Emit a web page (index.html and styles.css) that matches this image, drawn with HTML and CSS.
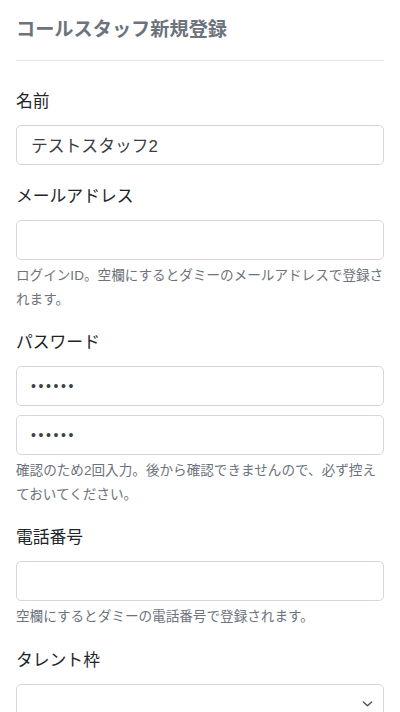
FILE: index.html
```html
<!DOCTYPE html>
<html lang="ja">
<head>
<meta charset="utf-8">
<title>コールスタッフ新規登録</title>
<link rel="stylesheet" href="styles.css">
</head>
<body>
<div class="page">
  <header class="page-header">
    <h1 class="page-title">コールスタッフ新規登録</h1>
  </header>
  <form class="form">
    <div class="group">
      <label class="label">名前</label>
      <input class="control" type="text" value="テストスタッフ2">
    </div>
    <div class="group">
      <label class="label">メールアドレス</label>
      <input class="control" type="email" value="">
      <p class="help">ログインID。空欄にするとダミーのメールアドレスで登録されます。</p>
    </div>
    <div class="group">
      <label class="label">パスワード</label>
      <input class="control control-pw" type="password" value="123456">
      <input class="control control-pw control-second" type="password" value="123456">
      <p class="help">確認のため2回入力。後から確認できませんので、必ず控えておいてください。</p>
    </div>
    <div class="group">
      <label class="label">電話番号</label>
      <input class="control" type="tel" value="">
      <p class="help">空欄にするとダミーの電話番号で登録されます。</p>
    </div>
    <div class="group">
      <label class="label">タレント枠</label>
      <div class="select-wrap">
        <select class="control select"><option></option></select>
        <svg class="chevron" viewBox="0 0 12 8" width="11" height="8"><path d="M1.5 1.8 L6 6 L10.5 1.8" fill="none" stroke="#4b5563" stroke-width="1.6" stroke-linecap="round" stroke-linejoin="round"/></svg>
      </div>
    </div>
  </form>
</div>
</body>
</html>
```
FILE: styles.css
```css
* { box-sizing: border-box; }
html, body { margin: 0; padding: 0; background: #fff; }
body {
  font-family: "Liberation Sans", "Noto Sans CJK JP", sans-serif;
  color: #212529;
}
.page { padding: 0 16px; }
.page-header {
  padding: 16px 0 16px;
  border-bottom: 1px solid #e3e6ea;
}
.page-title {
  margin: 0;
  font-size: 19.2px;
  line-height: 28px;
  font-weight: 700;
  color: #6c737c;
}
.form { padding-top: 29px; }
.group { margin-bottom: 20px; }
.label {
  display: block;
  font-size: 16.8px;
  line-height: 24px;
  margin-bottom: 11px;
  color: #212529;
}
.control {
  display: block;
  width: 100%;
  height: 40px;
  padding: 0 14px;
  font-family: "Liberation Sans", "Noto Sans CJK JP", sans-serif;
  font-size: 16.8px;
  color: #3a3f45;
  background: #fff;
  border: 1px solid #d3d8de;
  border-radius: 5px;
  outline: none;
}
.control-pw {
  font-size: 14px;
  letter-spacing: 2.6px;
  color: #3d4249;
}
.control-second { margin-top: 9px; }
.help {
  margin: 4px 0 0;
  font-size: 13.6px;
  line-height: 23.5px;
  color: #6c737c;
}
.select-wrap { position: relative; }
.select { appearance: none; -webkit-appearance: none; }
.chevron { position: absolute; right: 11px; top: 16px; }
```
